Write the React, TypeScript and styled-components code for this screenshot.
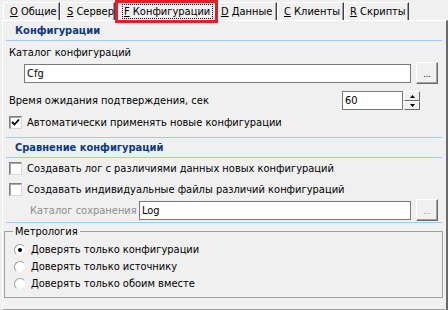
import styled, { createGlobalStyle } from "styled-components";

const GlobalStyle = createGlobalStyle`
  body {
    margin: 0;
    background: #f0f0f0;
  }
`;

const Root = styled.div`
  width: 448px;
  height: 310px;
  background: #f0f0f0;
  font-family: "DejaVu Sans Condensed", "Liberation Sans", sans-serif;
  font-size: 11px;
  color: #000;
  overflow: hidden;
  display: flex;
  flex-direction: column;
`;

const TabStrip = styled.div`
  display: flex;
  align-items: flex-end;
  height: 20px;
  padding-left: 3px;
  box-sizing: border-box;
`;

const Tab = styled.div<{ $w: number; $pad: number }>`
  width: ${(p) => p.$w}px;
  height: 18px;
  box-sizing: border-box;
  padding-left: ${(p) => p.$pad}px;
  border-top: 1px solid #fff;
  border-left: 1px solid #fff;
  border-right: 1px solid #404040;
  box-shadow: inset -1px 0 0 #a0a0a0;
  display: flex;
  align-items: center;
  white-space: nowrap;
`;

const ActiveTab = styled.div`
  position: relative;
  z-index: 1;
  width: 103px;
  height: 23px;
  margin-bottom: -3px;
  box-sizing: border-box;
  border: 3px solid #ea1c24;
  background: #f0f0f0;
  padding: 1px 0 0 4px;
  white-space: nowrap;
`;

const FocusRect = styled.div`
  width: 91px;
  height: 15px;
  box-sizing: border-box;
  border: 1px dotted #000;
  padding-left: 1px;
  line-height: 13px;
`;

const Key = styled.span`
  text-decoration: underline;
`;

const Panel = styled.div`
  flex: 1;
  margin-left: 2px;
  border-top: 1px solid #fff;
  border-left: 1px solid #fff;
  border-right: 2px solid #696969;
  border-bottom: 1px solid #a0a0a0;
  display: flex;
  flex-direction: column;
`;

const SectionTitle = styled.div<{ $top?: number }>`
  margin: ${(p) => p.$top ?? 0}px 4px 0 3px;
  height: 19px;
  line-height: 19px;
  padding-left: 9px;
  font-weight: bold;
  color: #0b3a82;
  border-bottom: 1px solid #99ccff;
  ${(p) => (p.$top ? "border-top: 1px solid #99ccff;" : "")}
`;

const Divider = styled.div<{ $top: number }>`
  margin: ${(p) => p.$top}px 4px 0 3px;
  border-top: 1px solid #99ccff;
`;

const FieldLabel = styled.div<{ $top: number }>`
  margin-top: ${(p) => p.$top}px;
  padding-left: 6px;
  height: 14px;
  line-height: 14px;
`;

const Row = styled.div<{ $top: number; $h: number; $left: number; $right?: number }>`
  margin-top: ${(p) => p.$top}px;
  height: ${(p) => p.$h}px;
  padding-left: ${(p) => p.$left}px;
  padding-right: ${(p) => p.$right ?? 0}px;
  display: flex;
  align-items: center;
`;

const RowLabel = styled.div<{ $w?: number; $disabled?: boolean }>`
  ${(p) => (p.$w ? `width: ${p.$w}px;` : "flex: 1;")}
  color: ${(p) => (p.$disabled ? "#8d8d8d" : "#000")};
  white-space: nowrap;
`;

const TextBox = styled.div<{ $w: number }>`
  width: ${(p) => p.$w}px;
  height: 19px;
  box-sizing: border-box;
  border: 1px solid #7a7a7a;
  background: #fff;
  padding-left: 2px;
  line-height: 17px;
`;

const BrowseButton = styled.div<{ $disabled?: boolean }>`
  width: 22px;
  height: 22px;
  margin-left: 5px;
  box-sizing: border-box;
  border: 1px solid;
  border-color: #fff #696969 #696969 #fff;
  box-shadow: inset -1px -1px 0 #a0a0a0;
  background: #f0f0f0;
  color: ${(p) => (p.$disabled ? "#a0a0a0" : "#000")};
  font-size: 9px;
  text-align: center;
  line-height: 22px;
`;

const SpinButtons = styled.div`
  display: flex;
  flex-direction: column;
  margin-left: 1px;
`;

const SpinButton = styled.div<{ $h: number }>`
  width: 16px;
  height: ${(p) => p.$h}px;
  box-sizing: border-box;
  border: 1px solid;
  border-color: #fff #696969 #696969 #fff;
  background: #f0f0f0;
  display: flex;
  align-items: center;
  justify-content: center;
`;

const CheckRow = styled.div<{ $top: number }>`
  margin-top: ${(p) => p.$top}px;
  height: 13px;
  padding-left: 6px;
  display: flex;
  align-items: center;
  gap: 5px;
  white-space: nowrap;
`;

const CheckBox = styled.div`
  width: 13px;
  height: 13px;
  box-sizing: border-box;
  border: 1px solid;
  border-color: #7f7f7f #d8d8d8 #d8d8d8 #7f7f7f;
  box-shadow: inset 1px 1px 0 #a8a8a8;
  background: #fff;
  display: flex;
  align-items: center;
  justify-content: center;
`;

const GroupBox = styled.fieldset`
  margin: 2px 3px 0 1px;
  padding: 3px 0 5px 8px;
  border: 1px solid #a0a0a0;
  min-width: 0;
`;

const Legend = styled.legend`
  padding: 0 2px;
  line-height: 13px;
`;

const RadioRow = styled.div`
  height: 17px;
  padding-left: 1px;
  display: flex;
  align-items: center;
  gap: 5px;
  white-space: nowrap;
`;

const Radio = styled.div<{ $on?: boolean }>`
  width: 12px;
  height: 12px;
  box-sizing: border-box;
  border-radius: 50%;
  border: 1px solid;
  border-color: #a0a0a0 #ececec #ececec #a0a0a0;
  background: #fff;
  display: flex;
  align-items: center;
  justify-content: center;
  &::after {
    content: "";
    width: 4px;
    height: 4px;
    border-radius: 50%;
    background: ${(p) => (p.$on ? "#000" : "transparent")};
  }
`;

function Check({ on }: { on?: boolean }) {
  return (
    <CheckBox>
      {on && (
        <svg width="9" height="9" viewBox="0 0 9 9">
          <path d="M1 4 L3.5 6.5 L8 1.5" fill="none" stroke="#000" strokeWidth="1.8" />
        </svg>
      )}
    </CheckBox>
  );
}

function Arrow({ up }: { up?: boolean }) {
  return (
    <svg width="5" height="3" viewBox="0 0 5 3">
      <path d={up ? "M2.5 0 L5 3 L0 3 Z" : "M0 0 L5 0 L2.5 3 Z"} fill="#000" />
    </svg>
  );
}

const tabs = [
  { key: "O", name: "Общие", w: 57, pad: 6 },
  { key: "S", name: "Сервер", w: 55, pad: 6 },
];

const tabsAfter = [
  { key: "D", name: "Данные", w: 59, pad: 2 },
  { key: "C", name: "Клиенты", w: 67, pad: 6 },
  { key: "R", name: "Скрипты", w: 65, pad: 5 },
];

const radios = ["Доверять только конфигурации", "Доверять только источнику", "Доверять только обоим вместе"];

export default function App() {
  return (
    <Root>
      <GlobalStyle />
      <TabStrip>
        {tabs.map((t) => (
          <Tab key={t.key} $w={t.w} $pad={t.pad}>
            <Key>{t.key}</Key>&nbsp;{t.name}
          </Tab>
        ))}
        <ActiveTab>
          <FocusRect>
            <Key>F</Key>&nbsp;Конфигурации
          </FocusRect>
        </ActiveTab>
        {tabsAfter.map((t) => (
          <Tab key={t.key} $w={t.w} $pad={t.pad}>
            <Key>{t.key}</Key>&nbsp;{t.name}
          </Tab>
        ))}
      </TabStrip>

      <Panel>
        <SectionTitle>Конфигурации</SectionTitle>
        <FieldLabel $top={5}>Каталог конфигураций</FieldLabel>
        <Row $top={2} $h={22} $left={21}>
          <TextBox $w={387}>Cfg</TextBox>
          <BrowseButton>...</BrowseButton>
        </Row>
        <Row $top={7} $h={19} $left={6} $right={26}>
          <RowLabel>Время ожидания подтверждения, сек</RowLabel>
          <TextBox $w={61}>60</TextBox>
          <SpinButtons>
            <SpinButton $h={10}>
              <Arrow up />
            </SpinButton>
            <SpinButton $h={9}>
              <Arrow />
            </SpinButton>
          </SpinButtons>
        </Row>
        <CheckRow $top={6}>
          <Check on />
          Автоматически применять новые конфигурации
        </CheckRow>

        <SectionTitle $top={8}>Сравнение конфигураций</SectionTitle>
        <CheckRow $top={4}>
          <Check />
          Создавать лог с различиями данных новых конфигураций
        </CheckRow>
        <CheckRow $top={8}>
          <Check />
          Создавать индивидуальные файлы различий конфигураций
        </CheckRow>
        <Row $top={3} $h={22} $left={27}>
          <RowLabel $w={109} $disabled>
            Каталог сохранения
          </RowLabel>
          <TextBox $w={272}>Log</TextBox>
          <BrowseButton $disabled>...</BrowseButton>
        </Row>
        <Divider $top={1} />

        <GroupBox>
          <Legend>Метрология</Legend>
          {radios.map((r, i) => (
            <RadioRow key={r}>
              <Radio $on={i === 0} />
              {r}
            </RadioRow>
          ))}
        </GroupBox>
      </Panel>
    </Root>
  );
}
